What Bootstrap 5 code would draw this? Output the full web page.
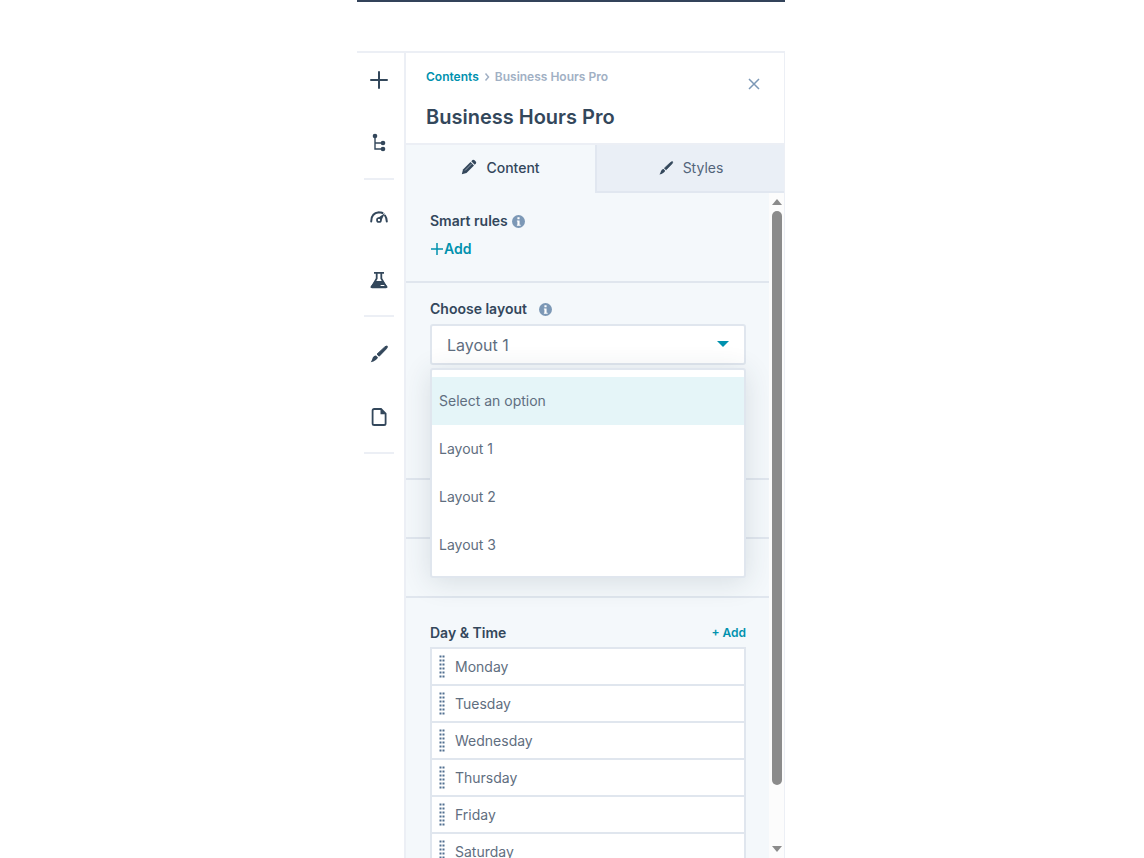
<!DOCTYPE html>
<html lang="en">
<head>
<meta charset="utf-8">
<meta name="viewport" content="width=device-width, initial-scale=1">
<title>Business Hours Pro</title>
<link href="https://cdn.jsdelivr.net/npm/bootstrap@5.3.0/dist/css/bootstrap.min.css" rel="stylesheet">
<style>
  :root { --ink: #33475b; --teal: #0091ae; --line: #e0e6ee; --soft: #eceff5; --pane: #f4f8fb; --muted: #a1b0c4; --body: #5f6e80; }
  body { font-family: Inter, "Open Sans", sans-serif; font-size: 14px; line-height: 20px; color: var(--ink); background: #fff; padding-right: 2px; }
  .editor { max-width: 428px; height: 100vh; }
  .work { min-height: 0; }
  .topbar { height: 53px; border-top: 2px solid #33435a; border-bottom: 2px solid var(--soft); }
  .rail { width: 47px; padding-top: 17px; }
  .rail-btn { width: 44px; height: 20px; margin-bottom: 43px; color: var(--ink); }
  .rail-btn.last-in-group { margin-bottom: 25px; }
  .rail-line { width: 30px; height: 2px; background: var(--soft); margin: 0 7px 27px; }
  .panel { border-left: 2px solid var(--soft); border-right: 1px solid var(--soft); min-width: 0; }
  .panel-head { height: 92px; padding: 14px 19px 0 20px; border-bottom: 2px solid var(--soft); }
  .crumbs { font-size: 12px; line-height: 20px; font-weight: 600; color: var(--muted); gap: 5px; }
  .teal-link { color: var(--teal); text-decoration: none; font-weight: 600; }
  .title { font-size: 20px; line-height: 28px; font-weight: 600; margin: 16px 0 0; }
  .tab-btn { height: 48px; padding-bottom: 3px; color: var(--ink); font-weight: 500; gap: 9px; background: var(--pane); }
  .tab-btn.idle { padding-bottom: 1px; background: #eaeff6; color: #53647a; font-weight: 400; border-left: 2px solid #e1e7f0; border-bottom: 2px solid #e1e7f0; }
  .tab-icon { color: var(--ink); }
  .pane { background: var(--pane); min-height: 0; }
  .fields { min-width: 0; }
  .block { padding: 0 23px 0 24px; border-bottom: 2px solid var(--line); flex: none; }
  .smart { height: 90px; padding-top: 18px; }
  .choose { height: 197px; padding-top: 16px; }
  .spacer-block { height: 59px; }
  .label { font-size: 14px; line-height: 20px; font-weight: 600; }
  .wide-gap { gap: 12px; }
  .form-select.layout-select { height: 41px; margin-top: 5px; padding: 0 40px 0 15px; border: 2px solid var(--line); border-radius: 3px; font-size: 16px; color: var(--body);
    background-image: url("data:image/svg+xml,%3Csvg xmlns='http://www.w3.org/2000/svg' viewBox='0 0 12 6'%3E%3Cpath fill='%230091ae' d='M0 0h12L6 6z'/%3E%3C/svg%3E"); background-size: 12px 6px; background-position: right 15px top 15px; }
  .options { top: 100%; left: 0; right: 0; margin-top: 3px; padding: 7px 0; background: #fff; border: 2px solid var(--line); border-radius: 3px; box-shadow: 0 4px 28px rgba(45,62,80,.14); z-index: 2; }
  .option { height: 48px; padding: 0 7px; color: var(--body); border: 0; background: none; text-align: left; width: 100%; display: block; }
  .option.hot { background: #e5f5f8; }
  .days { padding: 25px 23px 0 24px; }
  .small-link { font-size: 12px; }
  .day-list { margin-top: 4px; --bs-list-group-border-radius: 0; border: 2px solid var(--line); border-bottom: 0; }
  .day { height: 37px; padding: 0 7px; gap: 10px; color: var(--body); border: 0; border-bottom: 2px solid var(--line); background: #fff; }
  .scroller { width: 15px; background: #fcfcfc; padding: 6px 0; flex: none; }
  .thumb { width: 10px; background: #8b8b8b; border-radius: 5px; flex: 574; margin-top: 6px; }
  .gap-rest { flex: 61; }
  .close-btn { margin-top: 7px; height: 20px; width: 22px; }
</style>
<script src="https://cdn.jsdelivr.net/npm/bootstrap@5.3.0/dist/js/bootstrap.bundle.min.js"></script>
</head>
<body class="overflow-hidden">
<svg class="d-none" aria-hidden="true">
  <symbol id="brush" viewBox="0 0 20 20"><path d="M8 10.200 15.500 3.200Q17 1.800 18.200 2.100 18.700 3.300 17.400 4.800L10.200 12.200Z" fill="currentColor" stroke="currentColor" stroke-width="1"/><path d="M7 11.400 9 13.400Q7.500 16.700 1.800 18.200 3.100 16.200 3.800 13.600 5 11.300 7 11.400Z" fill="currentColor"/></symbol>
  <symbol id="info" viewBox="0 0 12 12"><circle cx="6" cy="6" r="6" fill="#7c98b6"/><path d="M5 2h2v2H5zM4.500 5H7v4h1v1H4.500V9H5V6h-.5z" fill="#fff"/></symbol>
  <symbol id="grip" viewBox="0 0 6 23"><path d="M1.500 .5V23M4.500 .5V23" stroke="#516f90" stroke-width="2" stroke-dasharray="2 2"/></symbol>
</svg>
<div class="editor mx-auto d-flex flex-column overflow-hidden">
  <header class="topbar flex-shrink-0"></header>
  <div class="work d-flex flex-grow-1">
    <nav class="rail flex-shrink-0" aria-label="Editor tools">
      <button class="rail-btn btn p-0 border-0 d-flex align-items-center justify-content-center" aria-label="Add"><svg width="20" height="20" viewBox="0 0 20 20"><path d="M10 2v16M2 10h16" stroke="currentColor" stroke-width="2" stroke-linecap="round"/></svg></button>
      <button class="rail-btn last-in-group btn p-0 border-0 d-flex align-items-center justify-content-center" aria-label="Contents"><svg width="20" height="20" viewBox="0 0 20 20"><path d="M6 3v13h8M6 10h8" fill="none" stroke="currentColor" stroke-width="1.400"/><g fill="currentColor"><circle cx="6" cy="3" r="2.300"/><circle cx="14" cy="10" r="2.300"/><circle cx="14" cy="16" r="2.300"/></g></svg></button>
      <div class="rail-line"></div>
      <button class="rail-btn btn p-0 border-0 d-flex align-items-center justify-content-center" aria-label="Optimize"><svg width="20" height="20" viewBox="0 0 20 20"><path d="M2.200 14.500Q2 6 10 5.200M10 5.200Q12 5.200 13.500 6M16 8.500Q17.800 11 17.800 14.500" fill="none" stroke="currentColor" stroke-width="2" stroke-linecap="round"/><circle cx="10" cy="13" r="2" fill="none" stroke="currentColor" stroke-width="1.700"/><path d="M8.500 11.200 16 6 12.500 13.300Z" fill="currentColor"/><circle cx="10" cy="13" r="1" fill="#fff"/></svg></button>
      <button class="rail-btn last-in-group btn p-0 border-0 d-flex align-items-center justify-content-center" aria-label="Tests"><svg width="20" height="20" viewBox="0 0 20 20"><path d="M5 2.800h10M7.700 3v5.500L3 16.500h14L12.300 8.500V3" fill="none" stroke="currentColor" stroke-width="1.800"/><path d="M6 11h8l4.400 5.500Q18.500 18.200 17 18.200H3Q1.500 18.200 1.600 16.500Z" fill="currentColor"/><path d="M12 15.500h3" stroke="#fff" stroke-linecap="round"/></svg></button>
      <div class="rail-line"></div>
      <button class="rail-btn btn p-0 border-0 d-flex align-items-center justify-content-center" aria-label="Theme"><svg width="20" height="20"><use href="#brush"/></svg></button>
      <button class="rail-btn last-in-group btn p-0 border-0 d-flex align-items-center justify-content-center" aria-label="Pages"><svg width="20" height="20" viewBox="0 0 20 20"><path d="M5.200 2h6.800l4.600 4.600v9.800Q16.600 18 15 18H5.200Q3.600 18 3.600 16.400V3.600Q3.600 2 5.200 2Z" fill="none" stroke="currentColor" stroke-width="1.800"/><path d="M11.500 2v5.200h5.200Z" fill="currentColor"/></svg></button>
      <div class="rail-line"></div>
    </nav>
    <main class="panel flex-grow-1 d-flex flex-column">
      <div class="panel-head flex-shrink-0 d-flex justify-content-between align-items-start">
        <div>
          <nav class="crumbs d-flex align-items-center" aria-label="Breadcrumb">
            <a href="#" class="teal-link">Contents</a>
            <svg width="6" height="10" viewBox="0 0 6 10"><path d="M1.500 1.500 4.500 5 1.500 8.500" fill="none" stroke="#a1b0c4" stroke-width="1.500"/></svg>
            <span>Business Hours Pro</span>
          </nav>
          <h1 class="title">Business Hours Pro</h1>
        </div>
        <button class="close-btn btn p-0 border-0 d-flex align-items-center justify-content-center" aria-label="Close"><svg width="12" height="12" viewBox="0 0 12 12"><path d="M1 1l10 10M11 1 1 11" stroke="#7c98b6" stroke-width="1.500"/></svg></button>
      </div>
      <div class="d-flex flex-shrink-0" role="tablist">
        <button class="tab-btn w-50 border-0 d-flex align-items-center justify-content-center" role="tab" aria-selected="true"><svg width="16" height="18" viewBox="0 0 16 18"><path d="M.8 15.200 2 10.500 9.500 3 13 6.500 5.500 14Z" fill="currentColor"/><path d="M10.300 2.200 11.500 1Q12.500 .3 13.600 1.300L14.700 2.400Q15.700 3.500 14.900 4.600L13.700 5.700Z" fill="currentColor"/><path d="M4 11.500 10.500 5" stroke="#a9b5c2" stroke-width=".8"/></svg>Content</button>
        <button class="tab-btn idle w-50 border-top-0 border-end-0 d-flex align-items-center justify-content-center" role="tab" aria-selected="false"><svg class="tab-icon" width="16" height="18"><use href="#brush"/></svg>Styles</button>
      </div>
      <div class="pane d-flex flex-grow-1">
        <div class="fields flex-grow-1 d-flex flex-column overflow-hidden">
          <section class="block smart">
            <div class="label d-flex align-items-center gap-1">Smart rules <svg width="13" height="13"><use href="#info"/></svg></div>
            <a href="#" class="teal-link d-flex align-items-center mt-2"><svg width="14" height="14" viewBox="0 0 14 14"><path d="M7 1v12M1 7h12" stroke="currentColor" stroke-width="1.500"/></svg>Add</a>
          </section>
          <section class="block choose">
            <label class="label wide-gap d-flex align-items-center" for="layout">Choose layout <svg width="13" height="13"><use href="#info"/></svg></label>
            <div class="position-relative">
              <select id="layout" class="form-select layout-select"><option>Layout 1</option></select>
              <div class="options position-absolute" role="listbox" aria-label="Layouts">
                <button class="option hot" role="option">Select an option</button>
                <button class="option" role="option">Layout 1</button>
                <button class="option" role="option">Layout 2</button>
                <button class="option" role="option">Layout 3</button>
              </div>
            </div>
          </section>
          <section class="block spacer-block"></section>
          <section class="block spacer-block"></section>
          <section class="days">
            <div class="d-flex justify-content-between align-items-center"><span class="label">Day &amp; Time</span><a href="#" class="teal-link small-link">+ Add</a></div>
            <ul class="day-list list-group mb-0">
              <li class="day list-group-item d-flex align-items-center"><svg width="6" height="23"><use href="#grip"/></svg>Monday</li>
              <li class="day list-group-item d-flex align-items-center"><svg width="6" height="23"><use href="#grip"/></svg>Tuesday</li>
              <li class="day list-group-item d-flex align-items-center"><svg width="6" height="23"><use href="#grip"/></svg>Wednesday</li>
              <li class="day list-group-item d-flex align-items-center"><svg width="6" height="23"><use href="#grip"/></svg>Thursday</li>
              <li class="day list-group-item d-flex align-items-center"><svg width="6" height="23"><use href="#grip"/></svg>Friday</li>
              <li class="day list-group-item d-flex align-items-center"><svg width="6" height="23"><use href="#grip"/></svg>Saturday</li>
            </ul>
          </section>
        </div>
        <div class="scroller d-flex flex-column align-items-center" aria-hidden="true">
          <svg class="flex-shrink-0" width="10" height="6"><path d="M0 6 5 0l5 6z" fill="#8b8b8b"/></svg>
          <div class="thumb"></div><div class="gap-rest"></div>
          <svg class="flex-shrink-0" width="10" height="6"><path d="M0 0h10L5 6z" fill="#8b8b8b"/></svg>
        </div>
      </div>
    </main>
  </div>
</div>
</body>
</html>
